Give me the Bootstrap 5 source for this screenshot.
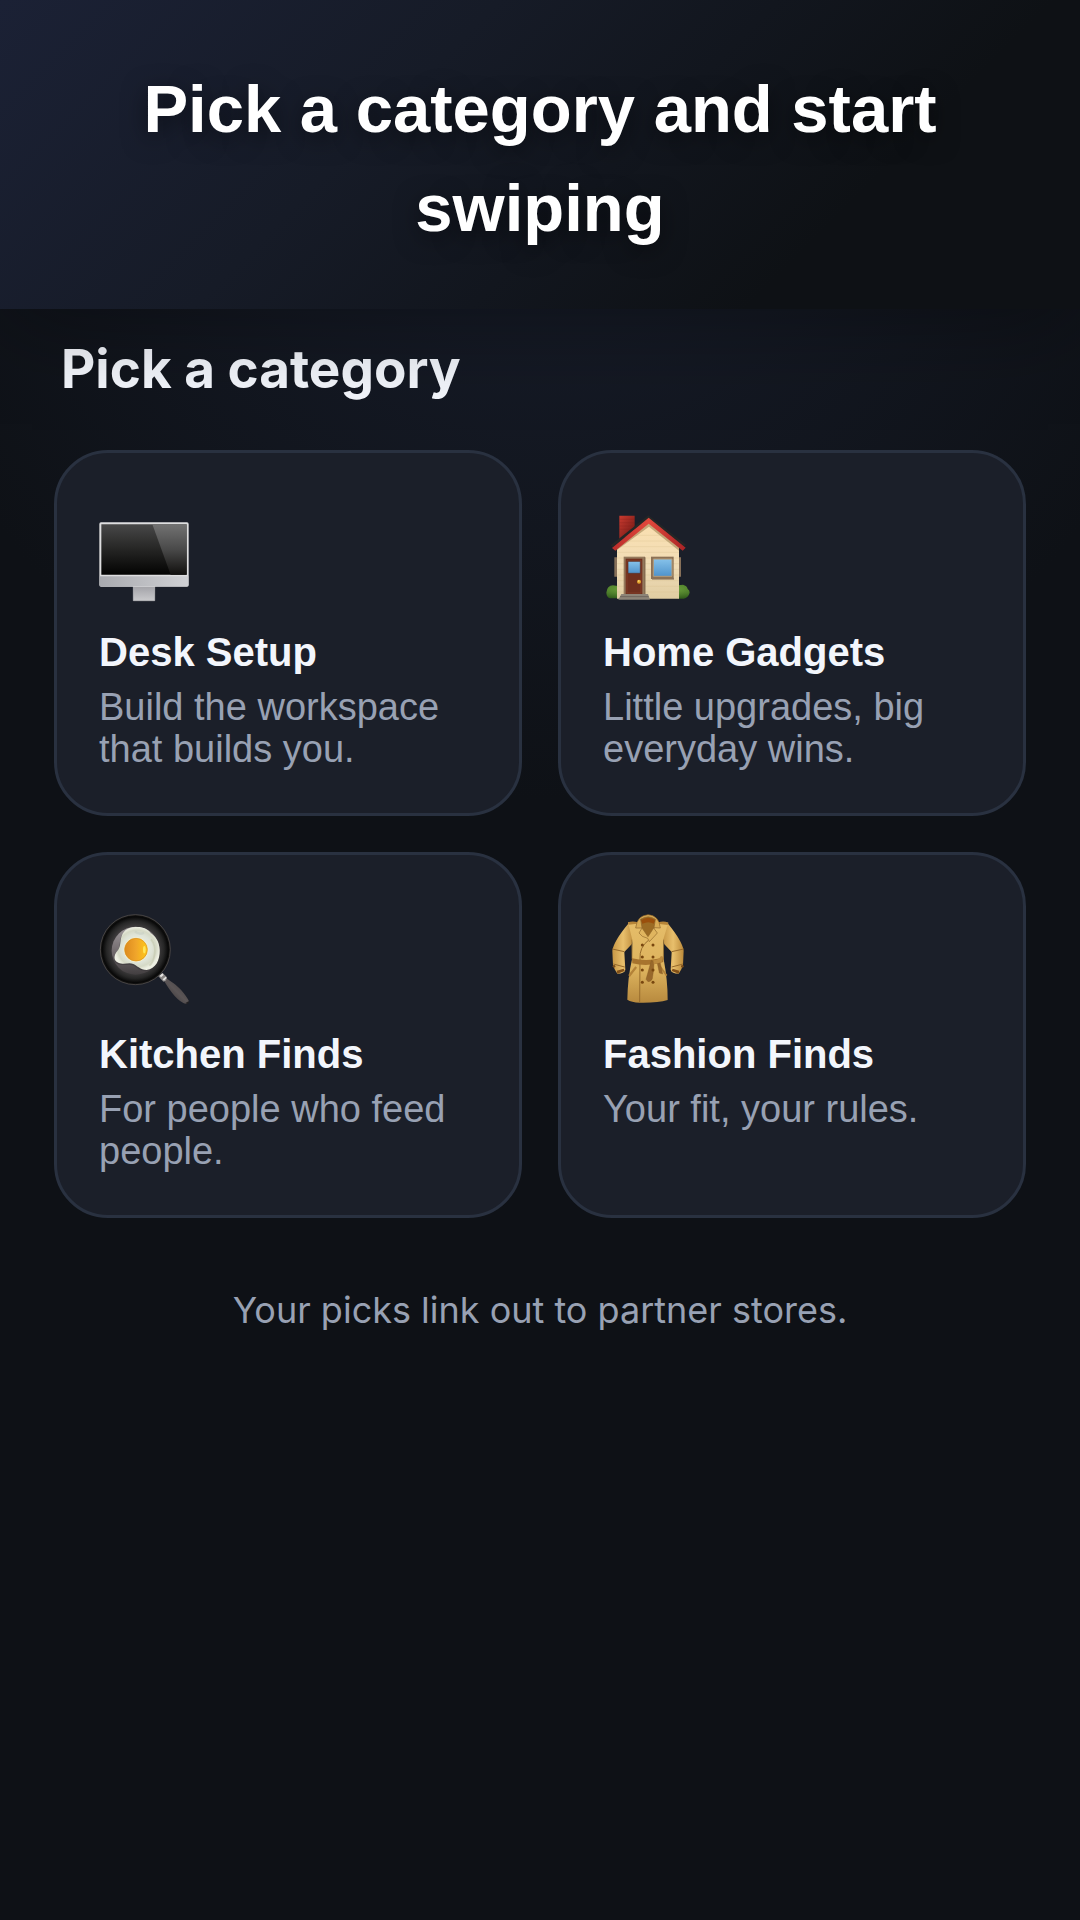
<!DOCTYPE html>
<html lang="en">
<head>
  <meta charset="UTF-8" />
  <meta name="viewport" content="width=device-width, initial-scale=1.0"/>
  <title>Pick a category</title>
  <link href="https://cdn.jsdelivr.net/npm/bootstrap@5.3.0/dist/css/bootstrap.min.css" rel="stylesheet">
  <style>
    body {
      min-height: 100vh;
      background: radial-gradient(ellipse 720px 800px at 50% 0, #1a2030, #0e1116) no-repeat #0e1116;
      font-family: Inter, 'Liberation Sans', sans-serif;
      color: #f3f6fc;
    }
    .hero {
      position: relative;
      z-index: 1;
      padding: 59px 60px 52px;
      background: linear-gradient(135deg, #1b2135, #161b27 36%, #0e1115 76%);
      box-shadow: 0 12px 90px rgba(0, 0, 0, 0.35);
    }
    .hero h1 {
      font-family: 'Liberation Sans', sans-serif;
      font-size: 67px;
      line-height: 99px;
      color: #fff;
      text-shadow: 0 6px 24px rgba(0, 0, 0, 0.5);
    }
    .picker {
      padding: 28px 54px 0;
    }
    .picker h2 {
      padding: 0 7px;
      margin-bottom: 49px;
      font-size: 53px;
      line-height: 64px;
    }
    .category-grid {
      --bs-gutter-x: 36px;
      --bs-gutter-y: 36px;
    }
    .category-btn {
      padding: 59px 42px 43px;
      background-color: #1b1f29;
      border: 3px solid #293140;
      border-radius: 54px;
      font-family: 'Liberation Sans', sans-serif;
      color: #f3f6fc;
    }
    .category-btn svg {
      width: 90px;
      height: 90px;
      margin-bottom: 27px;
    }
    .category-name {
      font-size: 40px;
      line-height: 46px;
      margin-bottom: 11px;
    }
    .category-text {
      font-size: 38px;
      line-height: 42px;
    }
    .category-text, .partner-note {
      color: #98a1b3;
    }
    .partner-note {
      padding: 65px 54px;
      font-size: 36px;
      line-height: 54px;
    }
  </style>
</head>
<body>

  <!-- Hero -->
  <header class="hero text-center">
    <h1 class="fw-bold mb-0">Pick a category and start swiping</h1>
  </header>

  <!-- Categories -->
  <main class="picker">
    <h2 class="fw-bold">Pick a category</h2>
    <div class="row row-cols-2 category-grid">
      <div class="col">
        <button type="button" class="category-btn w-100 h-100 d-flex flex-column align-items-start text-start">
          <svg viewBox="57 36 270 270" aria-hidden="true">
            <defs>
              <linearGradient id="screen" x2="0" y2="1"><stop stop-color="#484848"/><stop offset=".5" stop-color="#252524"/><stop offset="1" stop-color="#030302"/></linearGradient>
              <linearGradient id="glare" x2="0" y2="1"><stop stop-color="#727272"/><stop offset=".5" stop-color="#494949"/><stop offset="1" stop-color="#11100e"/></linearGradient>
              <linearGradient id="chin"><stop stop-color="#a9aaaf"/><stop offset="1" stop-color="#d0d1d4"/></linearGradient>
              <linearGradient id="stand" x2="0" y2="1"><stop stop-color="#a0a0a5"/><stop offset="1" stop-color="#c9c9cc"/></linearGradient>
            </defs>
            <path d="M160 256h64v46h-64z" fill="url(#stand)" stroke="#c9c9cc" stroke-width="2"/>
            <rect x="58" y="67" width="268" height="193" rx="5" fill="#dededf"/>
            <path d="M59 229h266v26q0 4-4 4H63q-4 0-4-4z" fill="url(#chin)"/>
            <path d="M64 73h256v151H64z" fill="url(#screen)"/>
            <path d="M217 73h103v151h-48z" fill="url(#glare)"/>
          </svg>
          <span class="category-name fw-bold">Desk Setup</span>
          <span class="category-text">Build the workspace that builds you.</span>
        </button>
      </div>
      <div class="col">
        <button type="button" class="category-btn w-100 h-100 d-flex flex-column align-items-start text-start">
          <svg viewBox="39 36 270 270" aria-hidden="true">
            <defs>
              <linearGradient id="wall" x2="0" y2="1"><stop stop-color="#fbe0b0"/><stop offset=".6" stop-color="#f0dcb6"/><stop offset="1" stop-color="#e0cda2"/></linearGradient>
              <linearGradient id="brick" x2="1" y2="1"><stop stop-color="#c93a2f"/><stop offset="1" stop-color="#6d1713"/></linearGradient>
              <linearGradient id="roof"><stop stop-color="#b92d2a"/><stop offset=".5" stop-color="#e2483c"/><stop offset="1" stop-color="#a82325"/></linearGradient>
              <linearGradient id="pane" x2="0" y2="1"><stop stop-color="#86c2ea"/><stop offset="1" stop-color="#4f93cb"/></linearGradient>
              <radialGradient id="bush" cx=".5" cy=".3" r=".8"><stop stop-color="#86b94a"/><stop offset=".5" stop-color="#5f9234"/><stop offset="1" stop-color="#2f5a1a"/></radialGradient>
            </defs>
            <path d="M88 47h46v50l-46 22z" fill="url(#brick)"/>
            <path d="M89 58h44M89 68h44M89 78h44M89 88h44" stroke="#7d1c17" stroke-width="1" opacity=".6"/>
            <path d="M73 172h9v58h-9zM266 172h7v58h-7z" fill="#877059"/>
            <path d="M49 278q2-21 20-22l14 2v37H60q-10-3-11-17zM265 256l14-2q12 3 14 13 6 4 6 11-4 15-18 18h-16z" fill="url(#bush)"/>
            <path d="M81 140 176 62l91 78v156H81z" fill="url(#wall)"/>
            <path d="M130 106h90M110 123h132M81 140h186M81 157h186M81 174h186M81 191h186M81 208h186M81 225h186M81 242h186M81 259h186M81 276h186" stroke="#d9c08f" stroke-width="1.5" opacity=".6"/>
            <path d="M80 151 177 80l90 72v-13l-90-72-97 70z" fill="#a48355" opacity=".6"/>
            <path d="m62 136 113-90 113 88-5 5L176 54 68 141z" fill="#252726"/>
            <path d="M66 144 176 53l111 90-9 9L176 71 76 152z" fill="url(#roof)"/>
            <path d="M101 170h64v114h-64z" fill="#94795c"/>
            <path d="M107 176h50v106h-50z" fill="#6f2f1e"/>
            <path d="M111 181h42v98h-42z" fill="none" stroke="#88442b" stroke-width="2"/>
            <path d="M114 184h37v36h-37z" fill="url(#pane)" stroke="#5a2b20" stroke-width="2"/>
            <path d="M163 172h4v112h-4zM186 233h66v6h-66z" fill="#6f5842" opacity=".6"/>
            <circle cx="147" cy="245" r="6" fill="#e5a52c"/>
            <circle cx="146" cy="243" r="2.5" fill="#ffe287"/>
            <path d="M183 170h68v67h-68z" fill="#8c7256"/>
            <path d="M190 177h56v52h-56z" fill="url(#pane)" stroke="#b69a75" stroke-width="3"/>
            <path d="M94 282h80l6 17H85z" fill="#8d8478"/>
            <path d="M90 290h86" stroke="#5f5850" stroke-width="2"/>
          </svg>
          <span class="category-name fw-bold">Home Gadgets</span>
          <span class="category-text">Little upgrades, big everyday wins.</span>
        </button>
      </div>
      <div class="col">
        <button type="button" class="category-btn w-100 h-100 d-flex flex-column align-items-start text-start">
          <svg viewBox="42 42 270 270" aria-hidden="true">
            <defs>
              <radialGradient id="pan"><stop offset=".5" stop-color="#4b4648"/><stop offset=".68" stop-color="#3b393a"/><stop offset=".82" stop-color="#262626"/><stop offset=".94" stop-color="#080808"/><stop offset="1" stop-color="#1a1a19"/></radialGradient>
              <linearGradient id="panBase" x2="0" y2="1"><stop stop-color="#a09a9d"/><stop offset=".6" stop-color="#6a6366"/><stop offset="1" stop-color="#423e40"/></linearGradient>
              <radialGradient id="white" cx=".5" cy=".5"><stop stop-color="#f4f8ed"/><stop offset=".65" stop-color="#dfe4d8"/><stop offset=".85" stop-color="#d5d9c6"/><stop offset="1" stop-color="#eef0e3"/></radialGradient>
              <linearGradient id="yolk"><stop stop-color="#dc8a1e"/><stop offset=".5" stop-color="#f0a52b"/><stop offset="1" stop-color="#ffc818"/></linearGradient>
              <linearGradient id="handle" x1="0" y1="1" x2="1" y2="0"><stop stop-color="#2c2a2b"/><stop offset=".5" stop-color="#5b5556"/><stop offset="1" stop-color="#3b3838"/></linearGradient>
            </defs>
            <path d="m236 241 9-6c12 10 29 19 44 36q17 20 23 33l-9 8q-16-4-34-24-16-18-33-47z" fill="url(#handle)"/>
            <path d="m300 310 12-7-3 9z" fill="#242223"/>
            <circle cx="151" cy="149" r="105" fill="url(#pan)" stroke="#5e5855" stroke-width="2"/>
            <circle cx="152" cy="152" r="72" fill="url(#panBase)"/>
            <path d="M152 81C175 80 190 88 197 100 212 110 223 125 224 150 225 180 212 207 185 210 165 210 158 197 145 192 130 186 118 196 100 188 84 182 86 165 97 153 107 142 105 130 108 115 112 95 125 82 152 81z" fill="#3b373a" opacity=".6" transform="translate(-2 4)"/>
            <path d="M152 81C175 80 190 88 197 100 212 110 223 125 224 150 225 180 212 207 185 210 165 210 158 197 145 192 130 186 118 196 100 188 84 182 86 165 97 153 107 142 105 130 108 115 112 95 125 82 152 81z" fill="url(#white)"/>
            <path d="M198 118q16 18 10 48-3 22-15 31" fill="none" stroke="#bfc4a8" stroke-width="5" opacity=".5"/>
            <path d="M150 94q12 12 27 4" fill="none" stroke="#bdc7bd" stroke-width="7" opacity=".4"/>
            <circle cx="153" cy="149" r="37" fill="#f2efd0"/>
            <circle cx="153" cy="149" r="34" fill="url(#yolk)" stroke="#d98c12" stroke-width="2"/>
            <ellipse cx="178" cy="149" rx="4" ry="11" fill="#ffe55a"/>
            <path d="m220 229 13-10 13 13-3 10-8 3z" fill="#8a8786"/>
            <path d="m224 227 8-7 4 5-8 7zm9 11 9-8 3 4-8 8z" fill="#e5e4e2"/>
          </svg>
          <span class="category-name fw-bold">Kitchen Finds</span>
          <span class="category-text">For people who feed people.</span>
        </button>
      </div>
      <div class="col">
        <button type="button" class="category-btn w-100 h-100 d-flex flex-column align-items-start text-start">
          <svg viewBox="39 42 270 270" aria-hidden="true">
            <defs>
              <linearGradient id="coat" x2="0" y2="1"><stop stop-color="#e6bd69"/><stop offset=".6" stop-color="#dcb25d"/><stop offset="1" stop-color="#b88a3e"/></linearGradient>
              <linearGradient id="sleeve"><stop stop-color="#c89745"/><stop offset=".5" stop-color="#e8bf6c"/><stop offset="1" stop-color="#bc8a3a"/></linearGradient>
            </defs>
            <path d="m116 70 16 44-7 19-22 23 3 53q-1 11-24 12l-8-13-5-12-2-44q4-28 49-82z" fill="url(#sleeve)"/>
            <path d="m233 70-15 44 5 19 22 23-3 53q1 11 24 12l8-13 5-12 2-44q-4-28-48-82z" fill="url(#sleeve)"/>
            <path d="m67 147 36 8M281 147l-36 8M70 192l34 9M279 192l-34 9" fill="none" stroke="#96692a" stroke-width="3"/>
            <path d="m82 221 22-8-3-7-21 6zM266 221l-21-8 3-7 20 6z" fill="#825018"/>
            <circle cx="72" cy="199" r="4" fill="#7a4d1b"/><circle cx="277" cy="199" r="4" fill="#7a4d1b"/>
            <path d="M114 67 138 66h72l25 2-15 50 1 60q12 62 12 122-30 9-84 8-25-1-37-9 1-65 14-121l1-58z" fill="url(#coat)"/>
            <path d="M114 67q14-5 30 0l-3 4-25 3zM235 68q-14-6-30-1l3 5 25 3z" fill="#b68438"/>
            <path d="m125 119 1 59M221 119l-1 59" stroke="#9d7330" stroke-width="2"/>
            <path d="M151 64q4-16 23-16 20 0 25 16l-10 35-16 16-14-16z" fill="#9b6b24"/>
            <path d="M153 61q20-15 44 0l-5 10q-17-9-35 0z" fill="#9a4f0c"/>
            <path d="M137 84q4-37 37-40 33 2 37 40l-19-1 4-25q-21-15-44 0l4 26z" fill="#d8ab55" stroke="#8c642a" stroke-width="2"/>
            <path d="m156 84-9 15 10 10 16 6 5 10 16-17 8-9-11-15-17 26z" fill="#e0b55f" stroke="#936a2c" stroke-width="2"/>
            <path d="M175 121q-27 21-25 55l-1 131" fill="none" stroke="#986d2d" stroke-width="3"/>
            <path d="m115 225 21-26 5 4-22 29zM232 225l-20-28-4 3 20 29z" fill="#b38238"/>
            <path d="M126 175q35 8 68 3l26-5v13q-45 15-93 4z" fill="#a7742e"/>
            <path d="m184 181-16 57 6 7q10 0 13-9 5-24 5-49zM201 185l7 34 10 3-8-37z" fill="#98682b" stroke="#825721"/>
            <path d="M190 181q15 0 23-13l7 2-5 17-24 6z" fill="#bb8a3e"/>
            <g fill="#78460f"><circle cx="157" cy="135" r="4.5"/><circle cx="189" cy="135" r="4.5"/><circle cx="157" cy="171" r="4.5"/><circle cx="189" cy="171" r="4.5"/><circle cx="157" cy="210" r="4.5"/><circle cx="189" cy="210" r="4.5"/><circle cx="157" cy="247" r="4.5"/><circle cx="189" cy="247" r="4.5"/></g>
          </svg>
          <span class="category-name fw-bold">Fashion Finds</span>
          <span class="category-text">Your fit, your rules.</span>
        </button>
      </div>
    </div>
  </main>

  <!-- Footer -->
  <footer class="partner-note text-center">
    Your picks link out to partner stores.
  </footer>

  <script src="https://cdn.jsdelivr.net/npm/bootstrap@5.3.0/dist/js/bootstrap.bundle.min.js"></script>
</body>
</html>
